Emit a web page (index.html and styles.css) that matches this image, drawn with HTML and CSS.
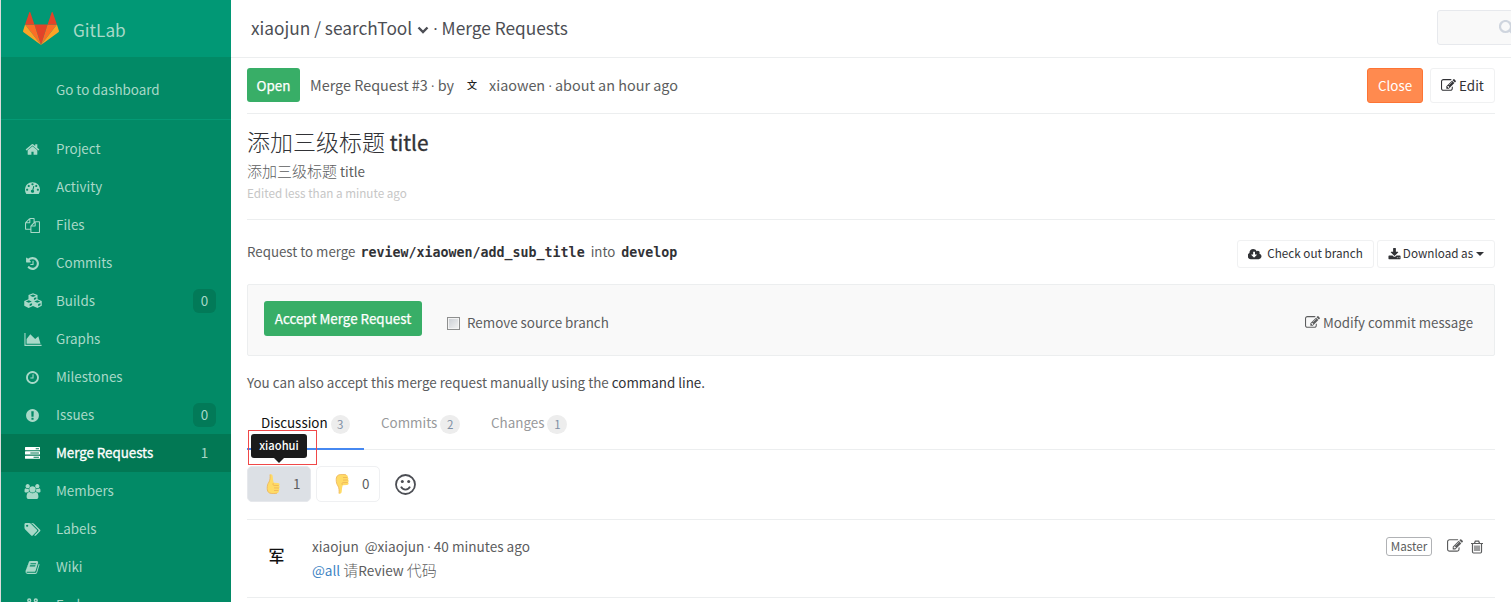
FILE: index.html
```html
<!DOCTYPE html>
<html lang="zh-CN">
<head>
<meta charset="utf-8">
<title>Merge Requests · GitLab</title>
<link rel="stylesheet" href="styles.css">
</head>
<body>
<svg class="defs" width="0" height="0" aria-hidden="true">
  <symbol id="pencil" viewBox="0 0 1792 1792"><path d="M888 1184l116-116-152-152-116 116v56h96v96h56zm440-720q-16-16-33 1l-350 350q-17 17-1 33t33-1l350-350q17-17 1-33zm80 594v190q0 119-84.5 203.5t-203.5 84.5h-832q-119 0-203.5-84.5t-84.5-203.5v-832q0-119 84.5-203.5t203.5-84.5h832q63 0 117 25 15 7 18 23 3 17-9 29l-49 49q-14 14-32 8-23-6-45-6h-832q-66 0-113 47t-47 113v832q0 66 47 113t113 47h832q66 0 113-47t47-113v-126q0-13 9-22l64-64q15-15 35-7t20 29zm-96-738l288 288-672 672h-288v-288zm444 132l-92 92-288-288 92-92q28-28 68-28t68 28l152 152q28 28 28 68t-28 68z"/></symbol>
  <symbol id="thumb" viewBox="0 0 16 20"><path fill="#ffdb66" d="M4 .5C5.500-.2 6.600.8 6.700 2.500c.1 2.200.5 4.200 1 6.200l4.300.3c1.700.2 2 1.900 1 2.700.9.700.9 1.900 0 2.500.7.800.5 2-.3 2.400.4 1.200-.3 2.300-1.700 2.600-2.500.5-5.500.6-7.500-.2-1.600-.7-2.300-2.500-2.300-4.500 0-2.600.4-4.700 1.800-6.500C4.200 5.800 4.200 3 4 .5z"/><path fill="none" stroke="#edb256" stroke-width=".8" d="M4 .5C4.200 3 4.200 5.800 3 8c-1.400 1.800-1.800 3.900-1.800 6.500 0 2 .7 3.800 2.300 4.500 2 .8 5 .7 7.500.2M7.700 8.900c-1 .8-1 2.300.2 2.500l4.800.1M8 13.900l4.900.1M8 16.500h4.500"/></symbol>
</svg>
<div class="page">
  <aside class="sidebar">
    <div class="brand">
      <svg class="logo" viewBox="0 0 36 33"><path fill="#e24329" d="M18 33L24.600 12.500H11.400z"/><path fill="#fc6d26" d="M18 33L11.400 12.500H2.100zM18 33l6.600-20.500h9.300z"/><path fill="#fca326" d="M2.100 12.500L.1 18.700c-.2.600 0 1.200.5 1.500L18 33zM33.900 12.500l2 6.200c.2.600 0 1.200-.5 1.500L18 33z"/><path fill="#e24329" d="M2.100 12.500h9.300L7.400.4c-.2-.6-1-.6-1.200 0zM33.900 12.500h-9.300L28.600.4c.2-.6 1-.6 1.200 0z"/></svg>
      <span>GitLab</span>
    </div>
    <a class="dash"><span>Go to dashboard</span></a>
    <nav class="nav">
      <a><svg class="ic" viewBox="0 0 1792 1792"><path d="M1472 992v480q0 26-19 45t-45 19h-384v-384h-256v384h-384q-26 0-45-19t-19-45v-480q0-1 .5-3t.5-3l575-474 575 474q1 2 1 6zm223-69l-62 74q-8 9-21 11h-3q-13 0-21-7l-692-577-692 577q-12 8-24 7-13-2-21-11l-62-74q-8-10-7-23.5t11-21.5l719-599q32-26 76-26t76 26l244 204v-195q0-14 9-23t23-9h192q14 0 23 9t9 23v408l219 182q10 8 11 21.5t-7 23.5z"/></svg><span>Project</span></a>
      <a><svg class="ic" viewBox="0 0 1792 1792"><path d="M384 1152q0-53-37.5-90.5t-90.5-37.5-90.5 37.5-37.5 90.5 37.5 90.5 90.5 37.5 90.5-37.5 37.5-90.5zm192-448q0-53-37.5-90.5t-90.5-37.5-90.5 37.5-37.5 90.5 37.5 90.5 90.5 37.5 90.500-37.500 37.500-90.500zm428 481l101-382q6-26-7.500-48.500t-38.500-29.500-48 6.500-30 39.500l-101 382q-60 5-107 43.500t-63 98.500q-20 77 20 146t117 89 146-20 89-117q16-60-6-117t-72-91zm660-33q0-53-37.500-90.500t-90.500-37.500-90.500 37.500-37.500 90.500 37.500 90.500 90.500 37.500 90.500-37.500 37.500-90.500zm-640-640q0-53-37.500-90.500t-90.500-37.500-90.500 37.500-37.500 90.500 37.500 90.500 90.500 37.500 90.500-37.500 37.500-90.500zm448 192q0-53-37.500-90.500t-90.500-37.500-90.500 37.500-37.500 90.500 37.500 90.500 90.500 37.500 90.500-37.500 37.500-90.500zm320 448q0 261-141 483-19 29-54 29h-1402q-35 0-54-29-141-221-141-483 0-182 71-348t191-286 286-191 348-71 348 71 286 191 191 286 71 348z"/></svg><span>Activity</span></a>
      <a><svg class="ic" viewBox="0 0 1792 1792"><path d="M1696 384q40 0 68 28t28 68v1216q0 40-28 68t-68 28h-960q-40 0-68-28t-28-68v-288h-544q-40 0-68-28t-28-68v-672q0-40 20-88t48-76l408-408q28-28 76-48t88-20h416q40 0 68 28t28 68v328q68-40 128-40h416zm-544 213l-299 299h299v-299zm-640-384l-299 299h299v-299zm196 647l316-316v-416h-384v416q0 40-28 68t-68 28h-416v640h512v-256q0-40 20-88t48-76zm956 804v-1152h-384v416q0 40-28 68t-68 28h-416v640h896z"/></svg><span>Files</span></a>
      <a><svg class="ic" viewBox="0 0 1792 1792"><path d="M1664 896q0 156-61 298t-164 245-245 164-298 61q-172 0-327-72.500t-264-204.500q-7-10-6.500-22.500t8.500-20.500l137-138q10-9 25-9 16 2 23 12 73 95 179 147t225 52q104 0 198.500-40.500t163.500-109.500 109.500-163.500 40.500-198.500-40.500-198.500-109.500-163.500-163.500-109.500-198.500-40.500q-98 0-188 35.500t-160 101.500l137 138q31 30 14 69-17 40-59 40h-448q-26 0-45-19t-19-45v-448q0-42 40-59 39-17 69 14l130 129q107-101 244.500-156.500t284.500-55.500q156 0 298 61t245 164 164 245 61 298zm-640-288v448q0 14-9 23t-23 9h-320q-14 0-23-9t-9-23v-64q0-14 9-23t23-9h224v-352q0-14 9-23t23-9h64q14 0 23 9t9 23z"/></svg><span>Commits</span></a>
      <a><svg class="ic cubes" viewBox="0 0 20 17"><path d="M10 .3l4.800 1.900v4.500l4.500 1.900v5L14.700 16 10 13.700 5.300 16 .7 13.600v-5l4.500-1.900V2.200z"/><path class="cut" d="M6.800 2.900L10 1.600l3.200 1.300L10 4.200zM2.300 9.100l3.200-1.300 3.200 1.300-3.200 1.300zM11.300 9.100l3.200-1.300 3.200 1.300-3.200 1.300zM11 5.400l2.500-1v1.900L11 7.400zM6.500 11.800l2.500-1v1.900l-2.500 1.400zM15.500 11.800l2.500-1v1.900l-2.500 1.400z"/></svg><span>Builds</span><b>0</b></a>
      <a><svg class="ic wide" viewBox="0 0 2048 1792"><path d="M2048 1536v128h-2048v-1536h128v1408h1920zm-384-1024l256 896h-1664v-576l448-576 576 576z"/></svg><span>Graphs</span></a>
      <a><svg class="ic" viewBox="0 0 1792 1792"><path d="M1024 544v448q0 14-9 23t-23 9h-320q-14 0-23-9t-9-23v-64q0-14 9-23t23-9h224v-352q0-14 9-23t23-9h64q14 0 23 9t9 23zm416 352q0-148-73-273t-198-198-273-73-273 73-198 198-73 273 73 273 198 198 273 73 273-73 198-198 73-273zm224 0q0 209-103 385.500t-279.500 279.500-385.500 103-385.500-103-279.500-279.500-103-385.500 103-385.500 279.500-279.500 385.500-103 385.500 103 279.500 279.500 103 385.500z"/></svg><span>Milestones</span></a>
      <a><svg class="ic" viewBox="0 0 1792 1792"><path d="M896 128q209 0 385.500 103t279.500 279.500 103 385.500-103 385.500-279.500 279.500-385.500 103-385.500-103-279.500-279.500-103-385.500 103-385.500 279.500-279.500 385.500-103zm128 1247v-190q0-14-9-23.500t-22-9.500h-192q-13 0-23 10t-10 23v190q0 13 10 23t23 10h192q13 0 22-9.500t9-23.500zm-2-344l18-621q0-12-10-18-10-8-24-8h-220q-14 0-24 8-10 6-10 18l17 621q0 10 10 17.500t24 7.500h185q14 0 23.500-7.500t10.500-17.500z"/></svg><span>Issues</span><b>0</b></a>
      <a class="active"><svg class="ic" viewBox="0 0 1792 1792"><path fill-rule="evenodd" d="M64 128h1664q64 0 64 64v256q0 64-64 64H64q-64 0-64-64V192q0-64 64-64zm1216 128v128h384V256zM64 640h1664q64 0 64 64v256q0 64-64 64H64q-64 0-64-64V704q0-64 64-64zm576 128v128h1024V768zM64 1152h1664q64 0 64 64v256q0 64-64 64H64q-64 0-64-64v-256q0-64 64-64zm960 128v128h640v-128z"/></svg><span>Merge Requests</span><b>1</b></a>
      <a><svg class="ic users" viewBox="0 0 1920 1792"><path d="M593 896q-162 5-265 128h-134q-82 0-138-40.500t-56-118.500q0-353 124-353 6 0 43.500 21t97.500 42.500 119 21.500q67 0 133-23-5 37-5 66 0 143 81 256zm1071 637q0 120-73 189.500t-194 69.500h-874q-121 0-194-69.500t-73-189.500q0-53 3.500-103.500t14-109 26.500-108.500 43-97.500 62-81 85.500-53.500 111.500-20q10 0 43 21.500t73 48 107 48 135 21.500 135-21.500 107-48 73-48 43-21.500q61 0 111.500 20t85.500 53.500 62 81 43 97.500 26.500 108.500 14 109 3.500 103.500zm-1024-1277q0 106-75 181t-181 75-181-75-75-181 75-181 181-75 181 75 75 181zm704 384q0 159-112.500 271.500t-271.500 112.500-271.500-112.500-112.500-271.500 112.500-271.500 271.500-112.500 271.500 112.500 112.500 271.500zm576 225q0 78-56 118.500t-138 40.500h-134q-103-123-265-128 81-113 81-256 0-29-5-66 66 23 133 23 59 0 119-21.500t97.500-42.500 43.500-21q124 0 124 353zm-128-609q0 106-75 181t-181 75-181-75-75-181 75-181 181-75 181 75 75 181z"/></svg><span>Members</span></a>
      <a><svg class="ic users" viewBox="0 0 1920 1792"><path d="M448 448q0-53-37.500-90.500t-90.500-37.500-90.500 37.500-37.500 90.500 37.500 90.500 90.500 37.500 90.500-37.500 37.500-90.500zm1067 576q0 53-37 90l-491 492q-39 37-91 37-53 0-90-37l-715-716q-38-37-64.500-101t-26.500-117v-416q0-52 38-90t90-38h416q53 0 117 26.500t102 64.500l715 714q37 39 37 91zm384 0q0 53-37 90l-491 492q-39 37-91 37-36 0-59-14t-53-45l470-470q37-37 37-90 0-52-37-91l-715-714q-38-38-102-64.500t-117-26.500h224q53 0 117 26.500t102 64.500l715 714q37 39 37 91z"/></svg><span>Labels</span></a>
      <a><svg class="ic" viewBox="0 0 1792 1792"><path d="M1703 478q40 57 18 129l-275 906q-19 64-76.500 107.500t-122.500 43.500h-923q-77 0-148.500-53.500t-99.500-131.500q-24-67-2-127 0-4 3-27t4-37q1-8-3-21.500t-3-19.500q2-11 8-21t16.500-23.500 16.500-23.500q23-38 45-91.500t30-91.500q3-10 .5-30t-.5-28q3-11 17-28t17-23q21-36 42-92t25-90q1-9-2.500-32t.5-28q4-13 22-30.500t22-22.500q19-26 42.500-84.500t27.500-96.500q1-8-3-25.500t-2-26.500q2-8 9-18t18-23 17-21q8-12 16.500-30.500t15-35 16-36 19.500-32 26.500-23.500 36-11.500 47.500 5.500l-1 3q38-9 51-9h761q74 0 114 56t18 130l-274 906q-36 119-71.500 153.500t-128.500 34.500h-869q-27 0-38 15-11 16-1 43 24 70 144 70h923q29 0 56-15.500t35-41.500l300-987q7-22 5-57 38 15 59 43zm-1064 2q-4 13 2 22.500t20 9.500h608q13 0 25.500-9.500t16.500-22.500l21-64q4-13-2-22.500t-20-9.500h-608q-13 0-25.500 9.500t-16.500 22.500zm-83 256q-4 13 2 22.500t20 9.500h608q13 0 25.500-9.500t16.500-22.500l21-64q4-13-2-22.500t-20-9.500h-608q-13 0-25.500 9.500t-16.500 22.500z"/></svg><span>Wiki</span></a>
      <a><svg class="ic fork" viewBox="0 0 16 16"><path d="M4.500 4v8M11.500 4c0 4-7 3-7 7"/><circle cx="4.500" cy="2.500" r="1.500"/><circle cx="11.500" cy="2.500" r="1.500"/><circle cx="4.500" cy="13.500" r="1.500"/></svg><span>Forks</span></a>
    </nav>
  </aside>
  <main class="main">
    <header class="top">
      <div class="crumbs"><span class="c1">xiaojun / searchTool</span><svg viewBox="0 0 12 8"><path d="M1.500 1.500L6 6l4.500-4.500"/></svg><span class="c2"><i class="dot">·</i> Merge Requests</span></div>
      <div class="search"><svg viewBox="0 0 16 16"><circle cx="6.500" cy="6.500" r="5.500"/><path d="M10.500 10.500l5 5"/></svg></div>
    </header>
    <div class="content">
      <section class="status">
        <span class="btn open"><span>Open</span></span>
        <span class="t meta">Merge Request #3 <i class="dot">·</i> by</span><span class="wen">文</span><span class="t ago">xiaowen <i class="dot">·</i> about an hour ago</span>
        <span class="btn close"><span>Close</span></span>
        <span class="btn edit"><svg><use href="#pencil"/></svg><span>Edit</span></span>
      </section>
      <section class="desc">
        <h2><span class="zh">添加三级标题</span> <span class="title-latin">title</span></h2>
        <p class="sub"><span class="zh">添加三级标题</span> title</p>
        <p class="edited">Edited less than a minute ago</p>
      </section>
      <section class="request">
        <span class="rt">Request to merge</span><code class="src">review/xiaowen/add_sub_title</code><span class="rt into">into</span><code>develop</code>
        <span class="small checkout"><svg viewBox="0 0 1920 1792"><path d="M1216 928q0-14-9-23t-23-9h-224v-352q0-13-9.500-22.500t-22.500-9.500h-192q-13 0-22.500 9.500t-9.500 22.500v352h-224q-13 0-22.500 9.500t-9.500 22.500q0 14 9 23l352 352q9 9 23 9t23-9l351-351q10-12 10-24zm640 224q0 159-112.500 271.500t-271.500 112.500h-1088q-185 0-316.500-131.500t-131.500-316.500q0-130 70-240t188-165q-2-30-2-43 0-212 150-362t362-150q156 0 285.500 87t188.500 231q71-62 166-62 106 0 181 75t75 181q0 76-41 138 130 31 213.500 135.500t83.500 238.500z"/></svg><span>Check out branch</span></span>
        <span class="small download"><svg viewBox="0 0 1792 1792"><path d="M1344 1344q0-26-19-45t-45-19-45 19-19 45 19 45 45 19 45-19 19-45zm256 0q0-26-19-45t-45-19-45 19-19 45 19 45 45 19 45-19 19-45zm128-224v320q0 40-28 68t-68 28h-1472q-40 0-68-28t-28-68v-320q0-40 28-68t68-28h465l135 136q58 56 136 56t136-56l136-136h464q40 0 68 28t28 68zm-325-569q17 41-14 70l-448 448q-18 19-45 19t-45-19l-448-448q-31-29-14-70 17-39 59-39h256v-448q0-26 19-45t45-19h256q26 0 45 19t19 45v448h256q42 0 59 39z"/></svg><span>Download as</span><i class="caret"></i></span>
      </section>
      <section class="accept">
        <span class="btn ok"><span>Accept Merge Request</span></span>
        <span class="check"></span><span class="rm">Remove source branch</span>
        <span class="modify"><svg><use href="#pencil"/></svg><span>Modify commit message</span></span>
      </section>
      <p class="manual"><span>You can also accept this merge request manually using the</span> <span class="cmd">command line.</span></p>
      <div class="tabs">
        <a class="on"><span>Discussion</span><em>3</em></a>
        <a><span>Commits</span><em>2</em></a>
        <a><span>Changes</span><em>1</em></a>
      </div>
      <div class="awards">
        <span class="award mine"><svg><use href="#thumb"/></svg><span>1</span><span class="frame"></span><span class="tip">xiaohui</span></span>
        <span class="award"><svg class="down"><use href="#thumb"/></svg><span>0</span></span>
        <svg class="smile" viewBox="0 0 21 21"><circle cx="10.500" cy="10.500" r="9.500"/><path d="M6 12.700c1.800 3.800 7.200 3.800 9 0"/><circle class="eye" cx="7.300" cy="7.500" r="1.500"/><circle class="eye" cx="13.700" cy="7.500" r="1.500"/></svg>
      </div>
      <article class="note">
        <span class="avatar">军</span>
        <div class="body">
          <p class="who"><span>xiaojun</span><span class="at">@xiaojun <i class="dot">·</i> 40 minutes ago</span></p>
          <p class="msg"><a>@all</a> <span class="zh">请</span>Review <span class="zh">代码</span></p>
        </div>
        <span class="role">Master</span>
        <svg class="act"><use href="#pencil"/></svg>
        <svg class="act trash" viewBox="0 0 14 14"><path d="M1 3.500h12M4.500 3.200L5.300 1.200h3.400l.8 2M2.500 3.500v8.300q0 1.200 1 1.200h7q1 0 1-1.200V3.500M5 5.500v5.500M7 5.500v5.500M9 5.500v5.500"/></svg>
      </article>
    </div>
  </main>
</div>
</body>
</html>
```
FILE: styles.css
```css
* { box-sizing: border-box; }
html, body { margin: 0; height: 100%; overflow: hidden; }
body {
  background: #fff;
  color: #5c5d5e;
  font: 13.4px/20px "Noto Sans CJK SC", "Noto Sans", sans-serif;
  white-space: nowrap;
}
p, h2 { margin: 0; }
svg { display: block; flex: none; fill: currentColor; }
.defs { position: absolute; }
.dot { font: normal 13px/1 "Open Sans", sans-serif; }
.page { display: flex; height: 602px; overflow: hidden; border-left: 1px solid #dcdcdc; }

.sidebar { width: 230px; flex: none; background: #028a66; color: #a8d9c8; overflow: hidden; }
.brand { display: flex; align-items: center; height: 57px; padding: 2px 0 0 22px; background: #019875; font-size: 17.2px; }
.logo { width: 36px; height: 33px; margin: -3px 14px 0 0; }
.dash { display: flex; align-items: center; height: 63px; padding: 2px 0 0 55px; border-bottom: 1px solid #049a75; }
.nav { padding-top: 10px; }
.nav a { display: flex; align-items: center; height: 38px; padding: 0 15px 0 24px; }
.nav a > span { flex: 1; margin-top: -2px; }
.ic { width: 15px; height: 15px; margin-right: 16px; }
.ic.wide { width: 18px; height: 15px; margin: 0 14px 0 -1px; }
.ic.users { width: 17px; height: 15px; margin: 0 15px 0 -1px; }
.ic.cubes { width: 20px; height: 16px; margin: 0 13px 0 -2px; }
.cubes .cut { fill: #028a66; stroke: none; }
.fork { stroke: currentColor; fill: none; stroke-width: 1.5; }
.nav b { width: 23px; height: 24px; border-radius: 6px; background: #027a58; font-weight: 400; text-align: center; line-height: 23px; }
.nav .active { background: #027854; color: #fff; }
.active > span { -webkit-text-stroke: .3px; letter-spacing: -.05px; }
.active b { background: none; color: #a8d9c8; }

.main { flex: 1; min-width: 0; }
.top { display: flex; justify-content: space-between; height: 58px; border-bottom: 1px solid #eceeef; padding-left: 20px; overflow: hidden; }
.crumbs { display: flex; align-items: center; font-size: 17.3px; color: #4c4e54; padding-bottom: 2px; }
.crumbs .dot { font-size: 17px; }
.crumbs svg { width: 12px; height: 8px; margin: 4px 4px 0 5px; fill: none; stroke: #4c4e54; stroke-width: 2.4; }
.search { width: 90px; height: 35px; margin: 10px -16px 0 0; border: 1px solid #e7e9ed; border-radius: 3px; background: #f9f9f9; padding: 9px 0 0 61px; }
.search svg { width: 16px; height: 16px; fill: none; stroke: #cfd5de; stroke-width: 2.200; }
.content { padding: 0 16px; }

.status { display: flex; align-items: center; height: 56px; border-bottom: 1px solid #eceeef; }
.btn { display: flex; align-items: center; justify-content: center; height: 35px; border-radius: 3px; }
.btn > span, .t { margin-top: -2px; }
.open, .ok { background: #38ae67; color: #fff; -webkit-text-stroke: .25px; }
.open { width: 53px; height: 34px; margin: -1px 10px 0 0; }
.open > span { margin-top: 0; }
.meta, .ago { font-size: 14.4px; }
.wen { width: 34px; margin-left: 1px; text-align: center; font-size: 10px; font-weight: 500; color: #222; margin-top: -2px; }
.close { width: 56px; margin-left: auto; background: #ff8a4f; border: 1px solid #fd7434; color: #fff; }
.edit { width: 65px; margin-left: 7px; border: 1px solid #f0f1f2; color: #313236; }
.edit svg, .modify svg { width: 15px; height: 15px; margin-right: 3px; }

.desc { height: 106px; border-bottom: 1px solid #eceeef; padding-top: 12px; }
.zh { font-weight: 300; }
h2 { font-size: 20.800px; line-height: 30px; font-weight: 400; color: #313236; }
.title-latin { -webkit-text-stroke: .35px; }
h2 .zh { font-size: 23px; }
.sub { line-height: 26px; padding-top: 1px; }
.sub .zh { font-size: 15px; }
.edited { font-size: 11.700px; line-height: 20px; color: #c6c6c6; margin-top: -1px; }

.request { display: flex; align-items: center; height: 64px; padding-top: 4px; }
.rt { margin-top: -5px; font-size: 13.3px; }
code { font: bold 13.3px/20px "DejaVu Sans Mono", monospace; color: #313236; margin-top: -2px; }
.src { margin-left: 5px; margin-right: 6px; }
.into { margin-right: 6px; }
.small { display: flex; align-items: center; justify-content: center; height: 28px; border: 1px solid #f0f1f2; border-radius: 3px; font-size: 11.700px; color: #313236; }
.small > span { margin-top: -2px; }
.checkout { width: 137px; margin-left: auto; }
.checkout svg { width: 14px; height: 13px; margin-right: 5px; }
.download { width: 118px; margin-left: 3px; }
.download svg { width: 13px; height: 13px; margin-right: 2px; }
.caret { border: 4px solid transparent; border-top-color: #313236; border-bottom: 0; margin-left: 3px; }

.accept { display: flex; align-items: center; height: 72px; border: 1px solid #eceeef; background: #f9f9f9; border-radius: 2px; padding: 0 21px 0 16px; }
.ok { width: 158px; margin-top: -3px; }
.check { width: 13px; height: 13px; margin: 6px 7px 0 25px; border: 1px solid #8e8f8f; background: linear-gradient(135deg, #c9cdd3, #f4f4f4); box-shadow: inset 0 0 0 1px #f4f4f4; }
.rm { margin-top: 3px; }
.modify { display: flex; align-items: center; margin: 4px 0 0 auto; font-size: 13.3px; }
.modify span { margin-top: 1px; }

.manual { height: 54px; line-height: 20px; padding-top: 16px; }
.cmd { color: #313236; }
.tabs { display: flex; height: 40px; border-bottom: 1px solid #eceeef; }
.tabs a { display: flex; height: 40px; padding: 2px 14px 0; margin-right: 3px; color: #98999b; border-bottom: 2px solid transparent; }
.tabs a { width: 107px; }
.tabs .on { width: 117px; color: #111; border-color: #4688f1; }
.tabs em { width: 20px; height: 19px; border-radius: 10px; background: #ededed; margin: 3px 0 0 3px; text-align: center; font: normal 11.500px/18px "Noto Sans CJK SC", sans-serif; color: #7f8fa4; }
.awards { display: flex; align-items: center; height: 70px; padding-bottom: 1px; border-bottom: 1px solid #eceeef; }
.award { position: relative; display: flex; align-items: center; width: 64px; height: 36px; margin-right: 5px; padding-left: 18px; border: 1px solid #eff0f2; border-radius: 5px; }
.award svg { width: 16px; height: 20px; margin: 0 11px 0 0; }
.award svg + span { margin-top: -2px; }
.award .down { transform: scaleY(-1); }
.mine { background: #dce0e5; border-color: #e6e8ec; }
.frame { position: absolute; left: 0; top: -37px; width: 69px; height: 35px; border: 1px solid #f04848; }
.tip { position: absolute; left: 3px; top: -33px; width: 56px; height: 24px; border-radius: 3px; background: #1b1b1b; color: #fff; font-size: 11.200px; font-weight: 500; line-height: 22px; text-align: center; }
.tip::after { content: ""; position: absolute; left: 23px; top: 24px; border: 5px solid transparent; border-top-color: #1b1b1b; border-bottom: 0; }
.smile { width: 21px; height: 21px; margin: 1px 0 0 10px; fill: none; stroke: #4c4e54; stroke-width: 1.800; }
.smile .eye { fill: #4c4e54; stroke: none; }

.note { display: flex; height: 78px; border-bottom: 1px solid #eceeef; }
.avatar { width: 59px; padding-top: 25px; text-align: center; font-size: 16px; font-weight: 500; color: #111; }
.body { flex: 1; padding: 14px 0 0 6px; line-height: 24px; font-size: 13.6px; }
.at { margin-left: 6px; }
.msg a { color: #3e84c4; }
.msg .zh { font-size: 15px; }
.role { width: 46px; height: 19px; margin: 17px 15px 0 0; border: 1px solid #b0b2b5; border-radius: 3px; font-size: 11.700px; line-height: 16px; text-align: center; }
.act { width: 16px; height: 16px; margin-top: 18px; }
.act.trash { width: 14px; height: 14px; margin: 20px 11px 0 7px; fill: none; stroke: currentColor; stroke-width: 1.200; }
```
